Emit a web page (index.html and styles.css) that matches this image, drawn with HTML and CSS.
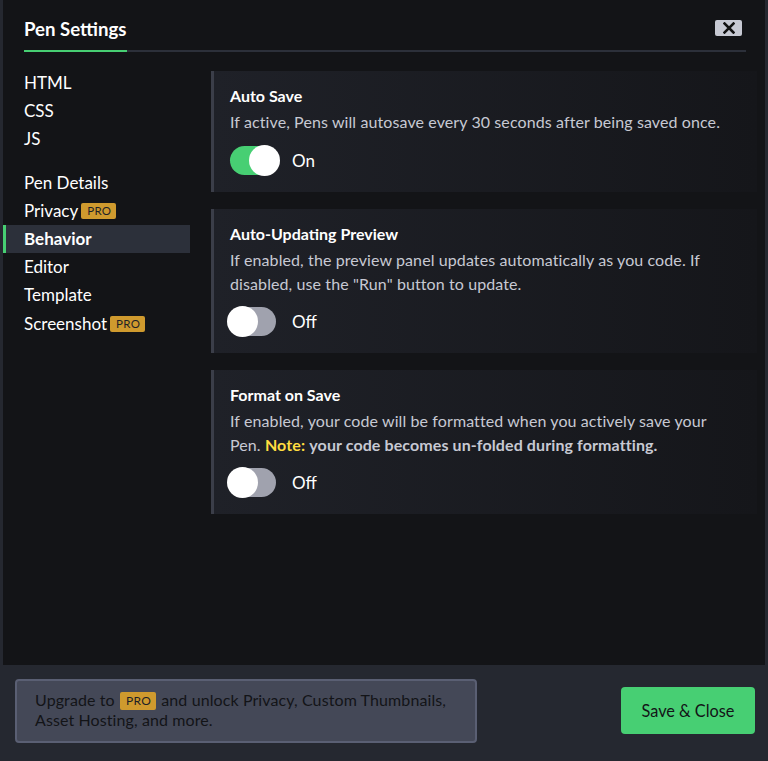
FILE: index.html
```html
<!DOCTYPE html>
<html lang="en">
<head>
<meta charset="utf-8">
<title>Pen Settings</title>
<link rel="stylesheet" href="styles.css">
</head>
<body>
<div class="modal">
  <div class="main">
    <header class="header">
      <h1 class="title">Pen Settings</h1>
      <button class="close" aria-label="Close">
        <svg width="12" height="12" viewBox="0 0 12 12"><path d="M1.5 1.5 L10.5 10.5 M10.5 1.5 L1.5 10.5" stroke="#111" stroke-width="2.5" stroke-linecap="square" fill="none"/></svg>
      </button>
    </header>
    <div class="body">
      <nav class="sidebar">
        <ul class="nav-group">
          <li class="nav-item">HTML</li>
          <li class="nav-item">CSS</li>
          <li class="nav-item">JS</li>
        </ul>
        <ul class="nav-group">
          <li class="nav-item">Pen Details</li>
          <li class="nav-item">Privacy <span class="pro">PRO</span></li>
          <li class="nav-item active">Behavior</li>
          <li class="nav-item">Editor</li>
          <li class="nav-item">Template</li>
          <li class="nav-item">Screenshot <span class="pro">PRO</span></li>
        </ul>
      </nav>
      <section class="content">
        <div class="card">
          <h2 class="card-title">Auto Save</h2>
          <p class="card-desc">If active, Pens will autosave every 30 seconds after being saved once.</p>
          <div class="toggle-row">
            <span class="toggle on"><span class="knob"></span></span>
            <span class="toggle-label">On</span>
          </div>
        </div>
        <div class="card">
          <h2 class="card-title">Auto-Updating Preview</h2>
          <p class="card-desc">If enabled, the preview panel updates automatically as you code. If disabled, use the "Run" button to update.</p>
          <div class="toggle-row tight">
            <span class="toggle"><span class="knob"></span></span>
            <span class="toggle-label">Off</span>
          </div>
        </div>
        <div class="card">
          <h2 class="card-title">Format on Save</h2>
          <p class="card-desc">If enabled, your code will be formatted when you actively save your Pen. <strong class="note">Note:</strong> <strong>your code becomes un-folded during formatting.</strong></p>
          <div class="toggle-row tight">
            <span class="toggle"><span class="knob"></span></span>
            <span class="toggle-label">Off</span>
          </div>
        </div>
      </section>
    </div>
  </div>
  <footer class="footer">
    <div class="upgrade">Upgrade to <span class="pro pro-footer">PRO</span> and unlock Privacy, Custom Thumbnails, Asset Hosting, and more.</div>
    <button class="save">Save &amp; Close</button>
  </footer>
</div>
</body>
</html>
```

FILE: styles.css
```css
* { box-sizing: border-box; }
html, body { margin: 0; padding: 0; }
body {
  background: #252830;
  font-family: Lato, "Open Sans", sans-serif;
  color: #fff;
}
.modal {
  width: 768px;
  height: 761px;
  display: flex;
  flex-direction: column;
  border-left: 3px solid #252830;
  border-right: 3px solid #252830;
  background: #252830;
}
.main {
  flex: 1;
  background: #131417;
  display: flex;
  flex-direction: column;
}
.header {
  margin: 0 19px 0 21px;
  height: 52px;
  display: flex;
  align-items: flex-start;
  justify-content: space-between;
  border-bottom: 2px solid #2c303a;
}
.title {
  margin: 0 0 -2px;
  font-size: 18.6px;
  font-weight: 700;
  line-height: 20px;
  padding: 19px 1px 11px 0;
  border-bottom: 2px solid #47cf73;
}
.close {
  margin: 20px 4px 0 0;
  width: 27px;
  height: 16px;
  border: 0;
  border-radius: 2px;
  background: #c7c9d3;
  padding: 0;
  display: flex;
  align-items: center;
  justify-content: center;
}
.body {
  display: flex;
  padding-top: 17px;
}
.sidebar {
  width: 187px;
  flex: none;
}
.nav-group {
  list-style: none;
  margin: 0 0 16px;
  padding: 0;
}
.nav-item {
  height: 28px;
  line-height: 28px;
  font-size: 17px;
  padding-left: 21px;
  color: #fff;
  display: flex;
  align-items: center;
  gap: 3px;
}
.nav-item:nth-child(5), .nav-item:nth-child(6) { height: 28.5px; }
.nav-item.active {
  background: #2c303a;
  font-weight: 700;
  border-left: 3px solid #47cf73;
  padding-left: 18px;
}
.pro {
  display: inline-block;
  background: #cf9a2e;
  color: #1e1f26;
  font-size: 11.5px;
  line-height: 16px;
  height: 16px;
  padding: 0 5px 0 6px;
  border-radius: 2px;
  font-weight: 400;
  letter-spacing: 0.3px;
}
.content {
  flex: 1;
  margin: 2px 8px 0 21px;
  display: flex;
  flex-direction: column;
  gap: 17px;
}
.card {
  background: linear-gradient(to right, #1f2128, #15161a);
  border-left: 3px solid #3b3e49;
  padding: 13px 16px 16px;
}
.card-title {
  margin: 0;
  font-size: 16px;
  line-height: 24px;
  font-weight: 700;
  color: #fff;
}
.card-desc {
  margin: 2px 0 0;
  max-width: 500px;
  font-size: 16px;
  line-height: 24px;
  letter-spacing: 0.1px;
  color: #c7c9d3;
}
.card-desc strong { color: #c7c9d3; font-weight: 700; }
.card-desc .note { color: #ffdd40; }
.toggle-row {
  display: flex;
  align-items: center;
  margin-top: 11px;
  height: 31px;
}
.toggle-row.tight { margin-top: 10px; }
.toggle {
  position: relative;
  width: 46px;
  height: 29px;
  border-radius: 15px;
  background: #a0a2ae;
  flex: none;
}
.toggle.on { background: #47cf73; }
.knob {
  position: absolute;
  top: -1px;
  left: -3px;
  width: 31px;
  height: 31px;
  border-radius: 50%;
  background: #fff;
}
.toggle.on .knob { left: auto; right: -4px; }
.toggle-label {
  margin-left: 16px;
  font-size: 17px;
  color: #fff;
}
.footer {
  height: 96px;
  flex: none;
  background: #252830;
  display: flex;
  align-items: flex-start;
  justify-content: space-between;
  padding: 14px 10px 0 12px;
}
.upgrade {
  width: 462px;
  height: 64px;
  background: #444857;
  border: 2px solid #5a5f73;
  border-radius: 4px;
  padding: 9px 18px;
  font-size: 16px;
  line-height: 19px;
  letter-spacing: 0.1px;
  color: #131417;
}
.pro-footer {
  font-size: 12px;
  height: 18px;
  line-height: 18px;
  vertical-align: 1px;
  margin: 0 1px;
}
.save {
  margin-top: 8px;
  width: 134px;
  height: 47px;
  border: 0;
  border-radius: 4px;
  background: #47cf73;
  color: #131417;
  font-family: Lato, "Open Sans", sans-serif;
  font-size: 16.3px;
  padding: 0;
}
```
